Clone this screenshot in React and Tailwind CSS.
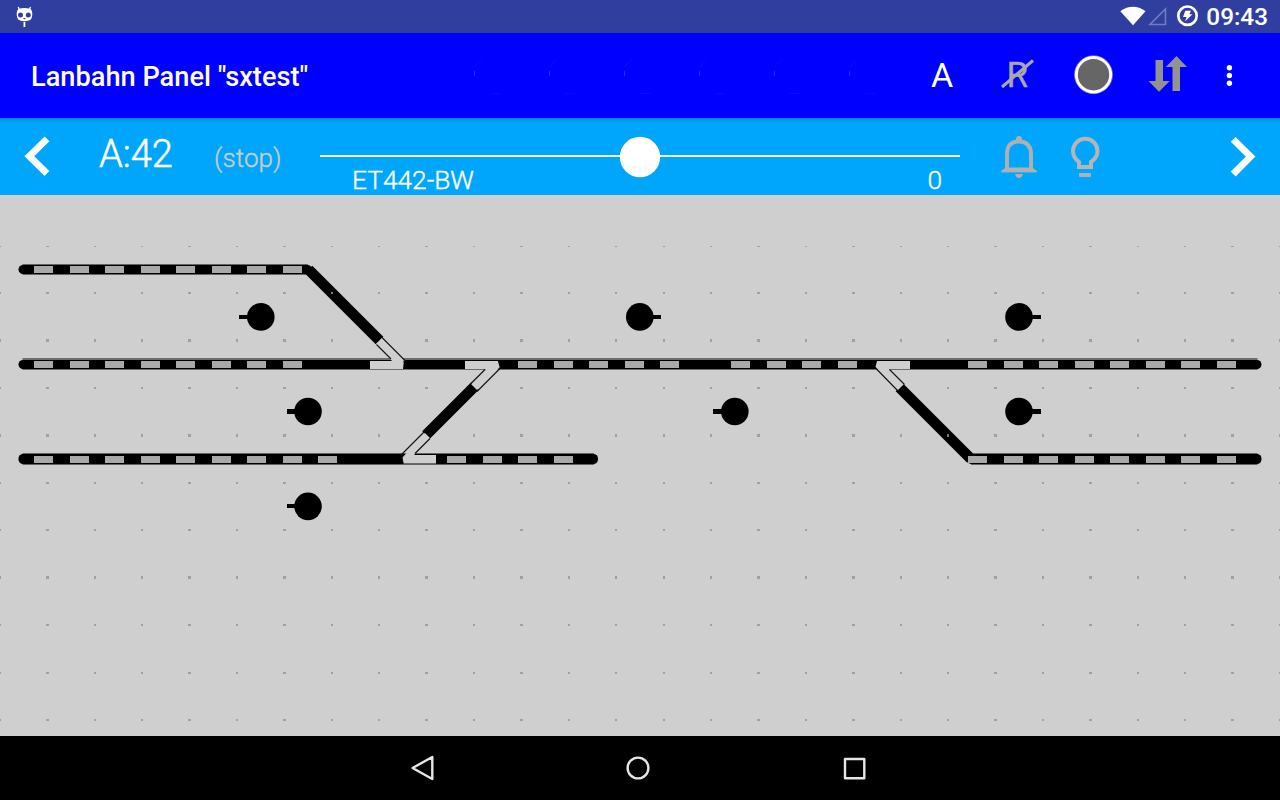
import React from 'react';

const range = (start, count) =>
  Array.from({ length: count }, (_, i) => Math.round(start + i * 35.5));

const WIDE_COLUMNS = [1, 4, 6, 9, 11, 16, 18, 21, 23, 26];

function Grid() {
  const dots = [];
  for (let row = 0; row < 11; row++) {
    for (let col = 0; col < 28; col++) {
      const wide = WIDE_COLUMNS.includes(col);
      const tall = [2, 4, 7].includes(row);
      const w = col === 0 || col === 27 ? 1 : wide ? 3 : 2;
      const h = row === 0 ? 1 : tall ? 3 : 2;
      const x = col === 0 ? 0 : col === 27 ? 1279 : wide ? Math.floor(col * 47.4) - 1 : Math.round(col * 47.4) - 1;
      const y = row === 0 ? 246 : Math.round(245.9 + row * 47.4) - (tall ? 2 : 1);
      dots.push(<rect key={`${row}-${col}`} x={x} y={y} width={w} height={h} />);
    }
  }
  return <g fill="#a0a0a0">{dots}</g>;
}

function Track({ x1, x2, top, bottom, edge = 1, color = '#5f655f' }) {
  return (
    <g>
      <rect x={x1 + 4} y={top} width={x2 - x1 - 8} height={bottom - top} fill={color} />
      <rect x={x1} y={top + edge} width={x2 - x1} height={bottom - top - edge - 1} rx="4.5" />
    </g>
  );
}

function Dashes({ xs, y }) {
  return (
    <g fill="#aaa8ab">
      {xs.map((x) => (
        <rect key={x} x={x} y={y} width="19" height="7" />
      ))}
    </g>
  );
}

function Sensor({ x, y, right, stub = 4 }) {
  return (
    <g>
      <circle cx={x} cy={y} r="13.8" />
      <rect x={right ? x + 10 : x - 21.5} y={Math.round(y - 2.3)} width="11.5" height={stub} shapeRendering="crispEdges" />
    </g>
  );
}

function TrackPlan() {
  return (
    <svg className="block h-[541px] w-full shrink-0 bg-[#cfcfcf]" viewBox="0 195 1280 541">
      <g shapeRendering="crispEdges">
        <Grid />
      </g>
      <Track x1={18.5} x2={312} top={264} bottom={275} />
      <Track x1={18.5} x2={1261.5} top={358} bottom={370} edge={2} color="#687068" />
      <Track x1={18.5} x2={598} top={453} bottom={465} />
      <Track x1={967} x2={1261.5} top={453} bottom={465} />
      <g stroke="#000" strokeWidth="10.8">
        <path d="M308.5 269.5 L379.5 340.5" />
        <path d="M426 435 L475 386" />
        <path d="M899.5 387.5 L971 459" />
      </g>
      <g shapeRendering="crispEdges">
        <Dashes xs={range(34, 8)} y={266} />
        <Dashes xs={[...range(34, 8), ...range(518, 5), ...range(731, 4), ...range(968, 8)]} y={361} />
        <Dashes xs={[...range(34, 9), ...range(447, 4), ...range(968, 8)]} y={456} />
      </g>
      <g fill="#cfcfcf">
        <path d="M370 361H392L376 344L382 338L404 360L403 369H370Z" />
        <path d="M465 361H498L500 367L477 390L471 384L486 369H465Z" />
        <path d="M436 463.5H403.5L402 458L425 433L430 438L414 455H436Z" />
        <path d="M910 361H877L875.5 367L898 390L904 384L889 369H910Z" />
      </g>
      <g fill="none" stroke="#111" strokeWidth="1.1">
        <path d="M376.5 344.5L391 359M382 337.5L405 360.5L403.5 362" />
        <path d="M485 369.5L470.5 384M477 391.5L500.5 368L498.5 361" />
        <path d="M424.5 431.5L401.5 454.5L403 463M430 438.5L415 453.5" />
        <path d="M875 367.5L898 391M889.5 369.5L904.5 384.5" />
      </g>
      <Sensor x={260.8} y={316.9} />
      <Sensor x={639.8} y={316.9} right />
      <Sensor x={1019} y={316.9} right />
      <Sensor x={308} y={411.5} stub={5} />
      <Sensor x={734.8} y={411.5} stub={5} />
      <Sensor x={1019} y={411.5} right stub={5} />
      <Sensor x={308} y={506.4} />
      <g fill="#777">
        <rect x="331" y="292" width="2" height="2" />
        <rect x="947" y="434" width="2" height="3" />
      </g>
    </svg>
  );
}

function StatusBar() {
  return (
    <div className="flex h-[33px] shrink-0 items-center bg-[#303f9f]">
      <svg className="ml-3 h-[33px] w-6" viewBox="12 0 24 33">
        <path d="M18.3 7L19.5 10M30.5 7L29.3 10" stroke="#fff" strokeWidth="1.3" />
        <path d="M19 8.8Q24.4 7.2 30 8.8Q32.3 10 32.3 14Q32.3 19 29.5 20.3Q24.4 22 19.5 20.3Q16.7 19 16.7 14Q16.7 10 19 8.8Z" fill="#fff" />
        <circle cx="20.5" cy="15" r="2.5" fill="#303f9f" />
        <circle cx="28.3" cy="15" r="2.5" fill="#303f9f" />
        <path d="M23.3 18.5h2.2M24.4 18v1.2" stroke="#303f9f" strokeWidth="0.8" />
        <path d="M24.4 22v5" stroke="#fff" strokeWidth="1.8" />
      </svg>
      <svg className="ml-auto h-[33px] w-[87px]" viewBox="1116 0 87 33">
        <path d="M1120.3 11.2Q1132.8 2.5 1145.5 11.2L1133 25.3Z" fill="#fff" />
        <path d="M1165.5 9V24.5H1150Z" fill="none" stroke="#717bbf" strokeWidth="1.6" />
        <circle cx="1187.5" cy="15.7" r="9.2" fill="none" stroke="#fff" strokeWidth="2.7" />
        <path d="M1185.3 10.8H1191L1189.3 14.2H1192.5L1185.2 21.3L1186.5 17.1H1183Z" fill="#fff" />
      </svg>
      <span className="mr-[12px] ml-[3px] pt-px font-['Roboto'] text-[24.3px] leading-[32px] font-medium text-white">09:43</span>
    </div>
  );
}

function AppBar() {
  return (
    <div className="flex h-[85px] shrink-0 items-center bg-[#0000ff]">
      <h1 className="w-[424px] pt-[4px] pl-[31px] font-['Roboto'] text-[27.2px] font-medium whitespace-nowrap text-white">
        Lanbahn Panel "sxtest"
      </h1>
      <div className="ml-[31px] flex">
        {[0, 1, 2, 3, 4, 5].map((i) => (
          <svg key={i} className="h-[85px] w-[75px]" viewBox="0 0 75 85" fill="none" stroke="#fff">
            <path d="M19.5 38v5" strokeWidth="1" opacity="0.16" />
            <path d="M20 34Q22 29 27 27" strokeWidth="0.8" opacity="0.05" />
            <path d="M35 60.5h10" strokeWidth="0.8" opacity="0.06" />
          </svg>
        ))}
      </div>
      <svg className="h-[85px] w-[75px]" viewBox="905 33 75 85">
        <text x="942" y="87" textAnchor="middle" fill="#fff" className="font-['Roboto'] text-[34px]">A</text>
      </svg>
      <svg className="h-[85px] w-[75px]" viewBox="980 33 75 85">
        <text x="1006.4" y="87" fill="#a8a8a8" stroke="#a8a8a8" strokeWidth="0.3" className="font-['Roboto'] text-[35px]">R</text>
        <path d="M1002 87L1033 60.5" stroke="#a8a8a8" strokeWidth="3" />
      </svg>
      <svg className="h-[85px] w-[75px]" viewBox="1055 33 75 85">
        <circle cx="1093.5" cy="74.7" r="17.2" fill="#666" stroke="#fff" strokeWidth="3" />
        <circle cx="1093.5" cy="74.7" r="19" fill="none" stroke="#ddd" strokeWidth="0.8" opacity="0.6" />
      </svg>
      <svg className="h-[85px] w-[75px]" viewBox="1130 33 75 85" fill="#929292">
        <path d="M1155.5 60H1163V81H1169.8L1159 91.7L1148.5 81H1155.5Z" />
        <path d="M1176.5 56L1187 67H1180V91H1172.5V67H1165.8Z" />
      </svg>
      <svg className="h-[85px] w-[49px]" viewBox="1205 33 49 85" fill="#fff">
        <circle cx="1229.4" cy="67.7" r="2.7" />
        <circle cx="1229.4" cy="75.5" r="2.7" />
        <circle cx="1229.4" cy="83.3" r="2.7" />
      </svg>
    </div>
  );
}

function Throttle() {
  return (
    <div className="flex h-[77px] shrink-0 bg-[linear-gradient(to_bottom,#0085cb_0px,#0098e8_2px,#00a6fb_5px)] font-['Roboto'] font-light text-white">
      <svg className="h-[77px] w-[75px]" viewBox="0 118 75 77">
        <path d="M47 138.8L29.3 156.3L47 173.5" fill="none" stroke="#fff" strokeWidth="6.8" />
      </svg>
      <div className="w-[139px] pt-[12px] pl-[24px] text-[38px] leading-[48px] font-light whitespace-nowrap [-webkit-text-stroke:0.5px_white]">A:42</div>
      <div className="w-[106px] pt-[23px] text-[26px] leading-[34px] tracking-[0.1px] text-[#cccccc] [-webkit-text-stroke:0.35px_#cccccc]">(stop)</div>
      <div className="w-[640px]">
        <svg className="block h-[46px] w-[640px] overflow-visible" viewBox="320 118 640 46">
          <path d="M320 156H960" stroke="#fff" strokeWidth="2" />
          <circle cx="640" cy="157" r="20.2" fill="#fff" />
        </svg>
        <div className="flex justify-between pr-[18px] pl-[32px] text-[26.3px] leading-[32px] [-webkit-text-stroke:0.4px_white]">
          <span>ET442-BW</span>
          <span>0</span>
        </div>
      </div>
      <svg className="h-[77px] w-[320px]" viewBox="960 118 320 77" fill="none">
        <g stroke="#b0b0b0">
          <path d="M1003 171H1035" strokeWidth="2.5" />
          <path d="M1007 170V154Q1007 142 1019 141.2Q1031 142 1031 154V170" strokeWidth="3.9" />
        </g>
        <g fill="#b0b0b0">
          <path d="M1016 141V139A3 3 0 0 1 1022 139V141ZM1001 171L1006 167.5H1032L1037 171V172.3H1001ZM1015 174H1023Q1022 178 1019 178Q1016 178 1015 174Z" />
          <rect x="1079" y="173" width="12" height="4" rx="1" />
        </g>
        <path d="M1079 167V162Q1073 157.5 1073 151A12.2 12.2 0 0 1 1097.5 151Q1097.5 157.5 1091 162V167Z" stroke="#b5b5b5" strokeWidth="4" />
        <path d="M1233.2 139.3L1250.6 156.6L1233.2 174" stroke="#fff" strokeWidth="6.8" />
      </svg>
    </div>
  );
}

function NavBar() {
  return (
    <div className="flex h-16 shrink-0 justify-center bg-black">
      <svg className="h-16 w-[648px]" viewBox="316 736 648 64" fill="none" stroke="#e6e6e6" strokeWidth="2.4" strokeLinejoin="round">
        <path d="M412.6 768L432.3 757V779Z" />
        <circle cx="638" cy="768" r="10.4" />
        <rect x="845" y="759" width="19.3" height="19.3" />
      </svg>
    </div>
  );
}

export default function App() {
  return (
    <div className="flex h-[800px] w-[1280px] flex-col overflow-hidden bg-black">
      <StatusBar />
      <AppBar />
      <Throttle />
      <TrackPlan />
      <NavBar />
    </div>
  );
}
